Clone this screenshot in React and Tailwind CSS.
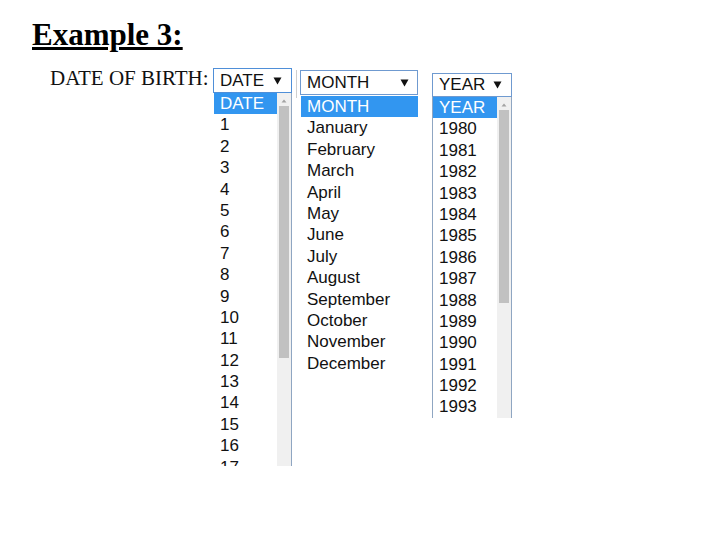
import React from "react";

const sans = { fontFamily: '"Liberation Sans", Arial, sans-serif' };

function Arrow() {
  return (
    <svg width="9" height="8" viewBox="0 0 9 8" className="block">
      <path d="M0.5 0.5 L8.5 0.5 L4.5 7.5 Z" fill="#111" />
    </svg>
  );
}

function Scrollbar({ thumbTop, thumbHeight }) {
  return (
    <div className="relative w-[14px] shrink-0 bg-[#f0f0f0] self-stretch">
      <svg width="14" height="12" viewBox="0 0 14 12" className="absolute left-0 top-[2px]">
        <path d="M4.5 7.5 L7 4.5 L9.5 7.5 Z" fill="#a3a3a3" />
      </svg>
      <div
        className="absolute left-[2px] w-[10px] bg-[#c1c1c1]"
        style={{ top: thumbTop, height: thumbHeight }}
      />
    </div>
  );
}

function Row({ children, selected, width }) {
  return (
    <div
      className={
        "h-[21.4px] leading-[21.4px] text-[17px] pl-[6px] whitespace-nowrap " +
        (selected ? "bg-[#3296f0] text-white" : "text-[#111]")
      }
      style={width ? { width } : undefined}
    >
      {children}
    </div>
  );
}

export default function App() {
  const days = Array.from({ length: 17 }, (_, i) => String(i + 1));
  const months = [
    "January",
    "February",
    "March",
    "April",
    "May",
    "June",
    "July",
    "August",
    "September",
    "October",
    "November",
    "December",
  ];
  const years = Array.from({ length: 14 }, (_, i) => String(1980 + i));

  return (
    <div className="w-[720px] h-[540px] bg-white overflow-hidden">
      <div
        className="pt-[19px] pl-[32px] text-[31px] leading-[31px] font-bold underline text-black"
        style={{ fontFamily: '"Liberation Serif", "Times New Roman", serif' }}
      >
        Example 3:
      </div>

      <div className="flex items-start mt-[18px]">
        <div
          className="ml-[50px] w-[163px] text-[21px] leading-[21px] text-[#111]"
          style={{ fontFamily: '"Liberation Serif", "Times New Roman", serif' }}
        >
          DATE OF BIRTH:
        </div>

        {/* DATE */}
        <div className="w-[79px] flex flex-col" style={sans}>
          <div className="h-[25px] border border-[#4f8fd8] flex items-center justify-between pl-[6px] pr-[9px] text-[17px] text-[#111] bg-white">
            <span>DATE</span>
            <Arrow />
          </div>
          <div className="h-[373px] flex overflow-hidden border-r border-[#8fa6c2] ml-[1px]">
            <div className="flex-1 flex flex-col">
              <Row selected>DATE</Row>
              {days.map((d) => (
                <Row key={d}>{d}</Row>
              ))}
            </div>
            <Scrollbar thumbTop={13} thumbHeight={252} />
          </div>
        </div>

        <div className="ml-[4px] mt-[2px] w-[1px] h-[28px] bg-[#cfcfcf]" />

        {/* MONTH */}
        <div className="ml-[3px] mt-[2px] w-[118px] flex flex-col" style={sans}>
          <div className="h-[25px] border border-[#6f9ad0] flex items-center justify-between pl-[6px] pr-[8px] text-[17px] text-[#111] bg-white">
            <span>MONTH</span>
            <Arrow />
          </div>
          <div className="flex flex-col ml-[1px] mt-[1px]">
            <Row selected>MONTH</Row>
            {months.map((m) => (
              <Row key={m}>{m}</Row>
            ))}
          </div>
        </div>

        {/* YEAR */}
        <div className="ml-[14px] mt-[5px] w-[80px] flex flex-col" style={sans}>
          <div className="h-[24px] border border-[#6f9ad0] flex items-center justify-between pl-[6px] pr-[9px] text-[17px] text-[#111] bg-white">
            <span>YEAR</span>
            <Arrow />
          </div>
          <div className="h-[321px] flex overflow-hidden border-l border-r border-[#8fa6c2]">
            <div className="flex-1 flex flex-col">
              <Row selected>YEAR</Row>
              {years.map((y) => (
                <Row key={y}>{y}</Row>
              ))}
            </div>
            <Scrollbar thumbTop={13} thumbHeight={193} />
          </div>
        </div>
      </div>
    </div>
  );
}
